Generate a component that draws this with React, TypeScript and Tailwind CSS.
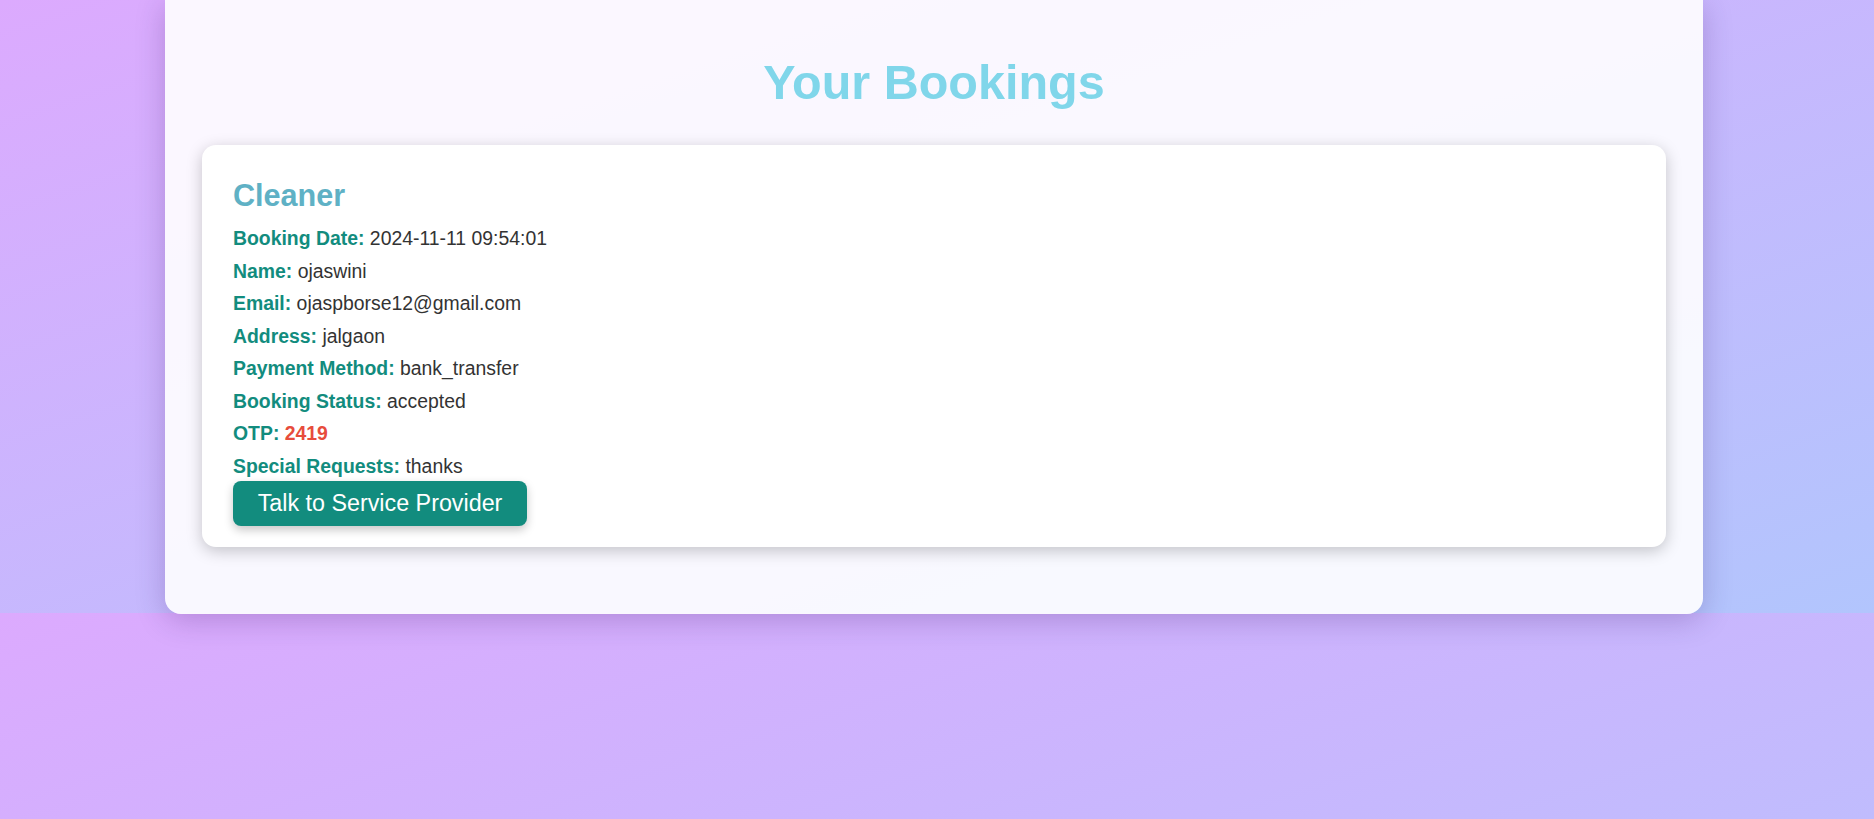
import React from "react";

type Booking = {
  service: string;
  bookingDate: string;
  name: string;
  email: string;
  address: string;
  paymentMethod: string;
  status: string;
  otp: string;
  specialRequests: string;
};

const bookings: Booking[] = [
  {
    service: "Cleaner",
    bookingDate: "2024-11-11 09:54:01",
    name: "ojaswini",
    email: "ojaspborse12@gmail.com",
    address: "jalgaon",
    paymentMethod: "bank_transfer",
    status: "accepted",
    otp: "2419",
    specialRequests: "thanks",
  },
];

const Row = ({ label, children }: { label: string; children: React.ReactNode }) => (
  <p className="leading-[29px] text-[#333333]">
    <strong className="font-bold text-[#128c7e]">{label}:</strong> {children}
  </p>
);

const BookingCard = ({ booking }: { booking: Booking }) => (
  <div className="rounded-[14px] bg-white pt-[32.2px] pb-[21.4px] pl-[31px] pr-[31px] shadow-[0_4px_16px_rgba(0,0,0,0.22)]">
    <h2 className="text-[30.6px] leading-[34px] font-bold text-[#5fb1c5]">{booking.service}</h2>
    <div className="mt-[12.7px] flex flex-col gap-[3.5px] text-[19.4px]">
      <Row label="Booking Date">{booking.bookingDate}</Row>
      <Row label="Name">{booking.name}</Row>
      <Row label="Email">{booking.email}</Row>
      <Row label="Address">{booking.address}</Row>
      <Row label="Payment Method">{booking.paymentMethod}</Row>
      <Row label="Booking Status">{booking.status}</Row>
      <Row label="OTP">
        <span className="font-bold text-[#e74c3c]">{booking.otp}</span>
      </Row>
      <Row label="Special Requests">{booking.specialRequests}</Row>
    </div>
    <button
      type="button"
      className="h-[45px] w-[294px] rounded-[8px] bg-[#128c7e] text-[23.3px] text-white shadow-[0_4px_10px_rgba(0,0,0,0.22)] hover:bg-[#0f7a6e]"
    >
      Talk to Service Provider
    </button>
  </div>
);

export default function App() {
  return (
    <div className="min-h-screen bg-[linear-gradient(to_bottom_right,#dcaafe,#b2c5fd)] bg-[length:100%_613px] bg-repeat font-['Liberation_Sans',Arial,sans-serif]">
      <div className="ml-[165px] w-[1538px] rounded-b-[16px] bg-white/90 px-[37px] pt-[53.6px] pb-[66.6px] shadow-[0_6px_30px_rgba(40,0,80,0.22)]">
        <h1 className="text-center text-[48.5px] leading-[56px] font-bold text-[#80d6ea]">Your Bookings</h1>
        <div className="mt-[35.9px] flex flex-col gap-5">
          {bookings.map((b) => (
            <BookingCard key={b.otp} booking={b} />
          ))}
        </div>
      </div>
    </div>
  );
}
